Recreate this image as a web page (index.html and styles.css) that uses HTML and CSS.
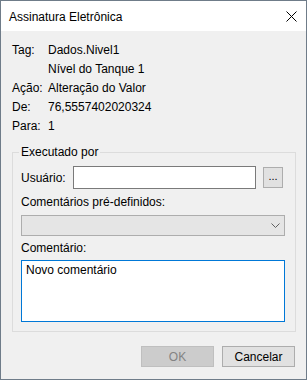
FILE: index.html
```html
<!DOCTYPE html>
<html lang="pt-BR">
<head>
    <meta charset="UTF-8">
    <meta name="viewport" content="width=device-width, initial-scale=1.0">
    <title>Assinatura Eletrônica</title>
    <link rel="stylesheet" href="styles.css">
</head>
<body>
    <div id="janela">
        <div id="titulo">
            <span>Assinatura Eletrônica</span>
            <svg class="fechar" width="11" height="11" viewBox="0 0 11 11"><path d="M0.5 0.5L10.5 10.5M10.5 0.5L0.5 10.5" stroke="#000" stroke-width="1" fill="none"/></svg>
        </div>
        <div id="conteudo">
            <div id="info">
                <span>Tag:</span><span>Dados.Nivel1</span>
                <span></span><span>Nível do Tanque 1</span>
                <span>Ação:</span><span>Alteração do Valor</span>
                <span>De:</span><span>76,5557402020324</span>
                <span>Para:</span><span>1</span>
            </div>
            <fieldset id="executado">
                <legend>Executado por</legend>
                <div class="linha_usuario">
                    <label for="usuario">Usuário:</label>
                    <input type="text" id="usuario">
                    <button class="btn_busca">...</button>
                </div>
                <label class="rotulo">Comentários pré-definidos:</label>
                <div class="combo">
                    <svg width="9" height="5" viewBox="0 0 9 5"><path d="M0.5 0.5L4.5 4.5L8.5 0.5" stroke="#606060" stroke-width="1" fill="none"/></svg>
                </div>
                <label class="rotulo rotulo_coment" for="comentario">Comentário:</label>
                <textarea id="comentario">Novo comentário</textarea>
            </fieldset>
            <div id="botoes">
                <button class="btn" disabled>OK</button>
                <button class="btn">Cancelar</button>
            </div>
        </div>
    </div>
</body>
</html>
```

FILE: styles.css
```css
body{margin: 0; font-family: "Liberation Sans", Arial, sans-serif; font-size: 12px; color: #000;}
#janela{width: 307px; height: 380px; box-sizing: border-box; border: 1px solid #6f7c89; background: #f0f0f0; display: flex; flex-direction: column;}
#titulo{height: 30px; flex: none; background: #fff; display: flex; align-items: center; justify-content: space-between; padding: 0 9px 0 8px;}
#titulo span{line-height: 16px; padding-top: 1px;}
#conteudo{flex: 1; padding: 10px 10px 0 11px; display: flex; flex-direction: column;}
#info{display: grid; grid-template-columns: 36px auto; line-height: 19px;}
#executado{margin: 8px 0 0 0; padding: 6px 10px 9px 8px; border: 1px solid #dcdcdc; min-width: 0;}
#executado legend{padding: 0 2px; margin-left: -2px; line-height: 16px;}
.linha_usuario{display: flex; align-items: center; height: 23px;}
.linha_usuario label{width: 52px;}
.linha_usuario input{width: 183px; height: 23px; box-sizing: border-box; border: 1px solid #7a7a7a; background: #fff; margin: 0; padding: 0 3px; font: inherit; outline: none;}
.btn_busca{width: 20px; height: 21px; margin-left: 7px; box-sizing: border-box; border: 1px solid #adadad; background: #e1e1e1; font: inherit; font-size: 11px; padding: 0 0 2px 0; line-height: 1;}
.rotulo{display: block; line-height: 16px; margin: 5px 0 5px 0;}
.rotulo_coment{margin: 4px 0 4px 0;}
.combo{height: 21px; box-sizing: border-box; border: 1px solid #adadad; background: #e5e5e5; display: flex; align-items: center; justify-content: flex-end; padding-right: 4px;}
#comentario{display: block; width: 100%; height: 62px; box-sizing: border-box; border: 1px solid #0078d7; padding: 2px 4px; margin: 0; font: inherit; line-height: 15px; resize: none; outline: none; background: #fff; color: #000;}
#botoes{display: flex; justify-content: flex-end; gap: 8px; margin-top: 14px; padding-right: 1px;}
.btn{width: 73px; height: 21px; box-sizing: border-box; border: 1px solid #adadad; background: #e1e1e1; font: inherit; color: #000; padding: 0;}
.btn:disabled{background: #cccccc; border-color: #bfbfbf; color: #838383;}
```
